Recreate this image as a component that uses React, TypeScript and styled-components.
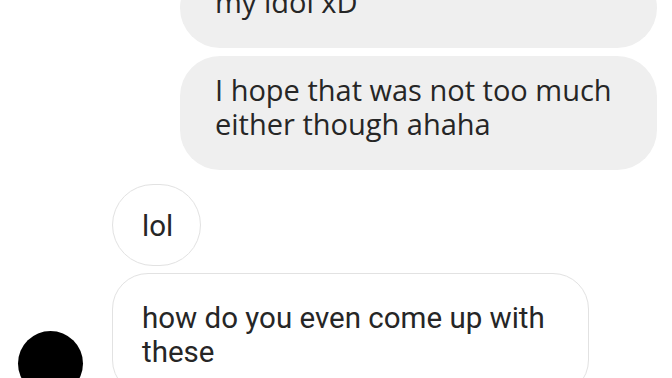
import styled, { createGlobalStyle } from "styled-components";

const GlobalStyle = createGlobalStyle`
  html, body {
    margin: 0;
    padding: 0;
    background: #ffffff;
  }
`;

const Screen = styled.div`
  width: 672px;
  height: 378px;
  overflow: hidden;
  background: #ffffff;
  display: flex;
  flex-direction: column;
`;

const SentGroup = styled.div`
  display: flex;
  flex-direction: column;
  align-items: flex-end;
  gap: 8px;
  margin-top: -32px;
  padding-right: 15px;
`;

const SentBubble = styled.div`
  box-sizing: border-box;
  width: 477px;
  background: #efefef;
  border-radius: 40px;
  padding: 17px 35px 29px;
  font-family: "Open Sans", sans-serif;
  font-size: 29px;
  line-height: 34px;
  color: #262626;
`;

const ReceivedGroup = styled.div`
  display: flex;
  flex-direction: column;
  gap: 7px;
  margin-top: 14px;
  padding-left: 18px;
`;

const Row = styled.div`
  display: flex;
  align-items: flex-end;
  gap: 29px;
`;

const AvatarSlot = styled("div")<{ filled?: boolean }>`
  flex: 0 0 65px;
  width: 65px;
  height: 65px;
  border-radius: 50%;
  background: ${(p) => (p.filled ? "#000000" : "transparent")};
`;

const ReceivedBubble = styled("div")<{ round?: boolean }>`
  box-sizing: border-box;
  border: 1.5px solid #e2e2e2;
  background: #ffffff;
  border-radius: ${(p) => (p.round ? "42px" : "36px")};
  padding: ${(p) => (p.round ? "24px 27px 22px 29px" : "27px 29px 26px")};
  font-family: Roboto, "Noto Sans", sans-serif;
  font-size: 29.5px;
  line-height: 34px;
  color: #262626;
  ${(p) => !p.round && { width: "477px" }}
`;

const App = () => {
  return (
    <Screen>
      <GlobalStyle />
      <SentGroup>
        <SentBubble>my idol xD</SentBubble>
        <SentBubble>
          I hope that was not too much
          <br />
          either though ahaha
        </SentBubble>
      </SentGroup>
      <ReceivedGroup>
        <Row>
          <AvatarSlot />
          <ReceivedBubble round>lol</ReceivedBubble>
        </Row>
        <Row>
          <AvatarSlot filled />
          <ReceivedBubble>
            how do you even come up with
            <br />
            these
          </ReceivedBubble>
        </Row>
      </ReceivedGroup>
    </Screen>
  );
};

export default App;
